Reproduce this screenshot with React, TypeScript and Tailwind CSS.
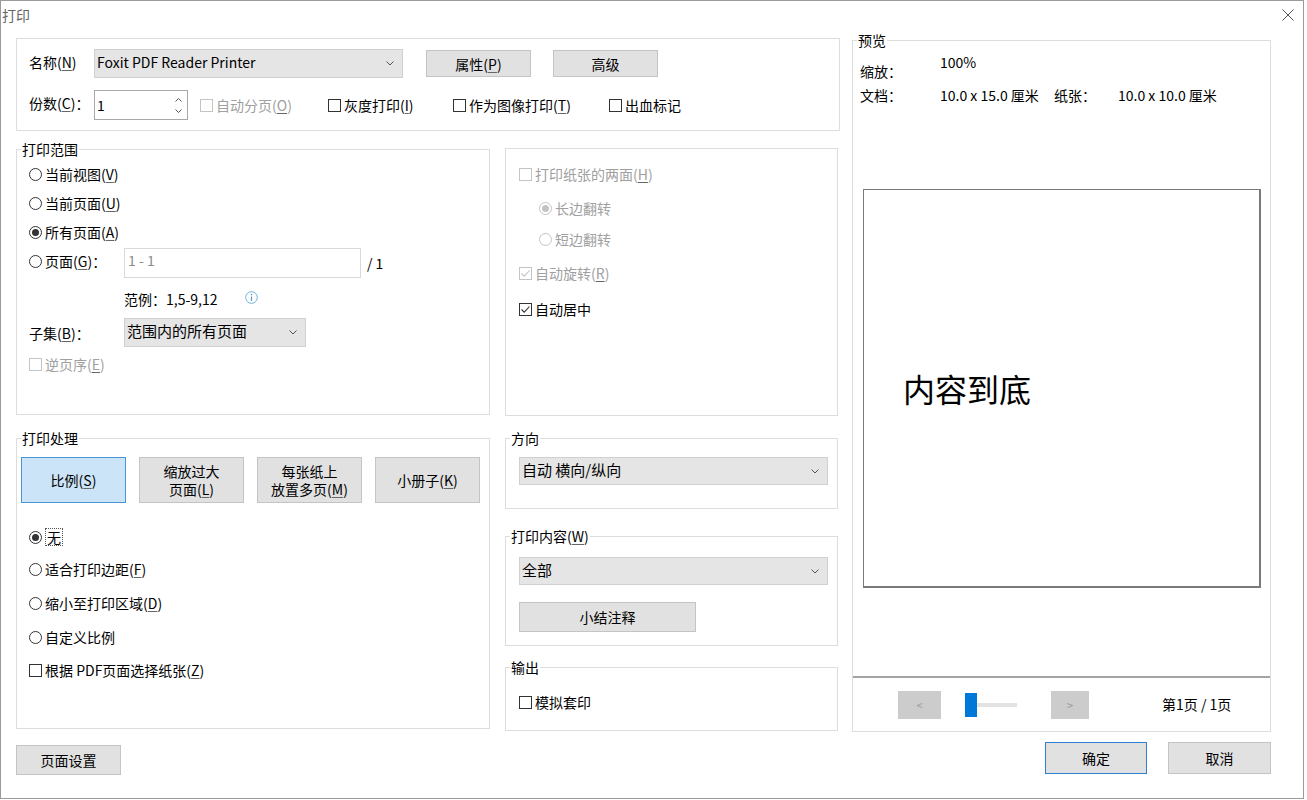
import React from 'react';

const FONT = "font-['Noto_Sans_CJK_SC','Noto_Sans',sans-serif]";

// mnemonic letter, underlined like the Windows dialog
function Mn({ c }: { c: string }) {
  return (
    <>
      (<span className="underline underline-offset-[2px] decoration-[#666]">{c}</span>)
    </>
  );
}

function Chevron() {
  return (
    <svg width="8" height="5" viewBox="0 0 8 5" className="shrink-0">
      <path d="M0.5 0.5 L4 4 L7.5 0.5" fill="none" stroke="#555" strokeWidth="1" />
    </svg>
  );
}

function Radio({
  checked,
  disabled,
  children,
  className = '',
}: {
  checked?: boolean;
  disabled?: boolean;
  children: React.ReactNode;
  className?: string;
}) {
  return (
    <div className={`flex items-center h-[20px] gap-[3px] ${className}`}>
      <span
        className={`w-[13px] h-[13px] rounded-full border bg-white flex items-center justify-center shrink-0 ${
          disabled ? 'border-[#c4c4c4]' : 'border-[#333333]'
        }`}
      >
        {checked && (
          <span className={`w-[7px] h-[7px] rounded-full ${disabled ? 'bg-[#c4c4c4]' : 'bg-[#333333]'}`} />
        )}
      </span>
      <span className={disabled ? 'text-[#a0a0a0]' : 'text-black'}>{children}</span>
    </div>
  );
}

function Check({
  checked,
  disabled,
  children,
  className = '',
}: {
  checked?: boolean;
  disabled?: boolean;
  children: React.ReactNode;
  className?: string;
}) {
  return (
    <div className={`flex items-center h-[20px] gap-[3px] ${className}`}>
      <span
        className={`w-[13px] h-[13px] border bg-white flex items-center justify-center shrink-0 ${
          disabled ? 'border-[#c4c4c4]' : 'border-[#333333]'
        }`}
      >
        {checked && (
          <svg width="11" height="11" viewBox="0 0 11 11">
            <path
              d="M1.5 5.5 L4.2 8.2 L9.5 2.5"
              fill="none"
              stroke={disabled ? '#c4c4c4' : '#333'}
              strokeWidth="1.1"
            />
          </svg>
        )}
      </span>
      <span className={disabled ? 'text-[#a0a0a0]' : 'text-black'}>{children}</span>
    </div>
  );
}

function Select({ value, className = '' }: { value: string; className?: string }) {
  return (
    <div
      className={`bg-[#e5e5e5] border border-[#d0d0d0] flex items-center justify-between pl-[2px] pr-[8px] ${className}`}
    >
      <span className="whitespace-nowrap leading-[22px] mb-[3px]">{value}</span>
      <Chevron />
    </div>
  );
}

function Btn({ children, className = '' }: { children: React.ReactNode; className?: string }) {
  return (
    <div
      className={`bg-[#e1e1e1] border border-[#c4c4c4] flex items-center justify-center text-center leading-[18px] ${className}`}
    >
      {children}
    </div>
  );
}

function Group({
  label,
  className = '',
  children,
}: {
  label: React.ReactNode;
  className?: string;
  children: React.ReactNode;
}) {
  return (
    <fieldset className={`border border-[#dddddd] min-w-0 ${className}`}>
      <legend className="ml-[4px] px-[1px] leading-[18px]">{label}</legend>
      {children}
    </fieldset>
  );
}

export default function App() {
  return (
    <div className={`w-[1307px] h-[800px] bg-white ${FONT} text-[14px] leading-[18px] text-black`}>
      <div className="w-[1304px] h-[799px] border border-[#9a9a9a] flex flex-col">
        {/* title bar */}
        <div className="h-[29px] flex items-start justify-between pl-[1px] pr-[9px]">
          <span className="mt-[5px] text-[#666666]">打印</span>
          <svg width="12" height="12" viewBox="0 0 12 12" className="mt-[8px]">
            <path d="M0.5 0.5 L11.5 11.5 M11.5 0.5 L0.5 11.5" stroke="#555" strokeWidth="1" />
          </svg>
        </div>

        <div className="flex pl-[15px] gap-[12px]">
          {/* left part */}
          <div className="w-[824px] flex flex-col">
            {/* printer */}
            <div className="mt-[8px] h-[93px] border border-[#dddddd] pt-[10px] pl-[12px]">
              <div className="flex items-center h-[29px]">
                <span className="w-[65px] mb-[3px]">
                  名称<Mn c="N" />
                </span>
                <Select value="Foxit PDF Reader Printer" className="w-[309px] h-[29px]" />
                <Btn className="w-[105px] h-[27px] ml-[23px]">
                  属性<Mn c="P" />
                </Btn>
                <Btn className="w-[105px] h-[27px] ml-[22px]">高级</Btn>
              </div>
              <div className="flex items-center h-[30px] mt-[12px]">
                <span className="w-[65px] mb-[5px]">
                  份数<Mn c="C" />：
                </span>
                <div className="w-[94px] h-[30px] border border-[#a8a8a8] bg-white flex items-center">
                  <span className="flex-1 pl-[2px]">1</span>
                  <div className="w-[18px] h-full flex flex-col items-center justify-center gap-[7px]">
                    <svg width="7" height="4" viewBox="0 0 7 4">
                      <path d="M0.5 3.5 L3.5 0.5 L6.5 3.5" fill="none" stroke="#555" />
                    </svg>
                    <svg width="7" height="4" viewBox="0 0 7 4">
                      <path d="M0.5 0.5 L3.5 3.5 L6.5 0.5" fill="none" stroke="#555" />
                    </svg>
                  </div>
                </div>
                <Check disabled className="ml-[12px] w-[128px]">
                  自动分页<Mn c="O" />
                </Check>
                <Check className="w-[125px]">
                  灰度打印<Mn c="I" />
                </Check>
                <Check className="w-[156px]">
                  作为图像打印<Mn c="T" />
                </Check>
                <Check>出血标记</Check>
              </div>
            </div>

            {/* range + duplex */}
            <div className="flex gap-[15px] mt-[9px] items-start">
              <Group label="打印范围" className="w-[474px] h-[275px]">
                <div className="pl-[12px] pt-[6px] flex flex-col">
                  <Radio>
                    当前视图<Mn c="V" />
                  </Radio>
                  <Radio className="mt-[9px]">
                    当前页面<Mn c="U" />
                  </Radio>
                  <Radio checked className="mt-[9px]">
                    所有页面<Mn c="A" />
                  </Radio>
                  <div className="flex items-center h-[30px] mt-[6px]">
                    <Radio className="w-[95px] mb-[4px]">
                      页面<Mn c="G" />：
                    </Radio>
                    <div className="w-[237px] h-[30px] border border-[#d9d9d9] pl-[3px] pt-[2px] text-[#8c8c8c]">
                      1 - 1
                    </div>
                    <span className="ml-[6px]">/ 1</span>
                  </div>
                  <div className="flex items-center h-[20px] mt-[11px] pl-[95px]">
                    <span>范例：1,5-9,12</span>
                    <svg width="13" height="13" viewBox="0 0 13 13" className="ml-[27px] mb-[3px]">
                      <circle cx="6.5" cy="6.5" r="5.8" fill="none" stroke="#6fb0d8" strokeWidth="1" />
                      <path d="M6.5 5.5 V10" stroke="#4f9ccc" strokeWidth="1.2" />
                      <circle cx="6.5" cy="3.6" r="0.8" fill="#4f9ccc" />
                    </svg>
                  </div>
                  <div className="flex items-center h-[29px] mt-[9px]">
                    <span className="w-[95px]">
                      子集<Mn c="B" />：
                    </span>
                    <Select value="范围内的所有页面" className="w-[182px] h-[29px] text-[15px]" />
                  </div>
                  <Check disabled className="mt-[7px]">
                    逆页序<Mn c="E" />
                  </Check>
                </div>
              </Group>

              <div className="w-[333px] h-[268px] mt-[8px] border border-[#dddddd] pl-[13px] pt-[15px] flex flex-col">
                <Check disabled>
                  打印纸张的两面<Mn c="H" />
                </Check>
                <Radio checked disabled className="ml-[20px] mt-[14px]">
                  长边翻转
                </Radio>
                <Radio disabled className="ml-[20px] mt-[11px]">
                  短边翻转
                </Radio>
                <Check checked disabled className="mt-[14px]">
                  自动旋转<Mn c="R" />
                </Check>
                <Check checked className="mt-[16px]">
                  自动居中
                </Check>
              </div>
            </div>

            {/* handling + orientation */}
            <div className="flex gap-[15px] mt-[13px] items-start">
              <Group label="打印处理" className="w-[474px] h-[300px]">
                <div className="pt-[10px] pl-[4px] flex gap-[13px]">
                  <Btn className="w-[105px] h-[46px] !bg-[#cce4f7] !border-[#4a94d4]">
                    比例<Mn c="S" />
                  </Btn>
                  <Btn className="w-[105px] h-[46px]">
                    <span>
                      缩放过大
                      <br />
                      页面<Mn c="L" />
                    </span>
                  </Btn>
                  <Btn className="w-[105px] h-[46px]">
                    <span>
                      每张纸上
                      <br />
                      放置多页<Mn c="M" />
                    </span>
                  </Btn>
                  <Btn className="w-[105px] h-[46px]">
                    小册子<Mn c="K" />
                  </Btn>
                </div>
                <div className="pl-[12px] flex flex-col">
                  <div className="flex items-center h-[20px] gap-[3px] mt-[24px]">
                    <span className="w-[13px] h-[13px] rounded-full border border-[#333333] bg-white flex items-center justify-center">
                      <span className="w-[7px] h-[7px] rounded-full bg-[#333333]" />
                    </span>
                    <span className="border border-dotted border-[#555] px-[1px] leading-[16px]">无</span>
                  </div>
                  <Radio className="mt-[12px]">
                    适合打印边距<Mn c="F" />
                  </Radio>
                  <Radio className="mt-[14px]">
                    缩小至打印区域<Mn c="D" />
                  </Radio>
                  <Radio className="mt-[14px]">自定义比例</Radio>
                  <Check className="mt-[13px]">
                    根据 PDF页面选择纸张<Mn c="Z" />
                  </Check>
                </div>
              </Group>

              <div className="w-[333px] flex flex-col">
                <Group label="方向" className="h-[80px]">
                  <div className="pt-[10px] pl-[13px]">
                    <Select value="自动 横向/纵向" className="w-[309px] h-[28px] text-[15px]" />
                  </div>
                </Group>
                <Group
                  label={
                    <>
                      打印内容<Mn c="W" />
                    </>
                  }
                  className="h-[119px] mt-[18px]"
                >
                  <div className="pt-[12px] pl-[13px]">
                    <Select value="全部" className="w-[309px] h-[28px] text-[15px]" />
                    <Btn className="w-[177px] h-[30px] mt-[17px]">小结注释</Btn>
                  </div>
                </Group>
                <Group label="输出" className="h-[73px] mt-[12px]">
                  <div className="pt-[16px] pl-[13px]">
                    <Check>模拟套印</Check>
                  </div>
                </Group>
              </div>
            </div>

            <Btn className="w-[105px] h-[30px] mt-[14px]">页面设置</Btn>
          </div>

          {/* preview */}
          <div className="w-[419px] flex flex-col">
            <Group label="预览" className="h-[701px] mt-[1px]">
              <div className="pt-[4px] pl-[7px] flex items-start h-[27px]">
                <span className="w-[80px] mt-[9px]">缩放：</span>
                <span>100%</span>
              </div>
              <div className="pl-[7px] flex items-center h-[18px] mt-[10px]">
                <span className="w-[80px]">文档：</span>
                <span className="w-[114px]">10.0 x 15.0 厘米</span>
                <span className="w-[64px]">纸张：</span>
                <span>10.0 x 10.0 厘米</span>
              </div>
              <div className="ml-[10px] mt-[85px] w-[398px] h-[399px] border border-[#7a7a7a] border-r-2 border-b-2 flex items-center pl-[39px]">
                <span className="text-[32px] leading-[40px]">内容到底</span>
              </div>
              <div className="mt-[88px] h-[2px] bg-[#a3a3a3]" />
              <div className="mt-[13px] h-[28px] flex items-center pl-[45px]">
                <div className="w-[43px] h-[28px] bg-[#cccccc] flex items-center justify-center text-[11px] text-[#9a9a9a]">
                  &lt;
                </div>
                <div className="ml-[24px] flex items-center">
                  <div className="w-[12px] h-[24px] bg-[#0078d7]" />
                  <div className="w-[40px] h-[4px] bg-[#e3e3e3]" />
                </div>
                <div className="ml-[34px] w-[38px] h-[28px] bg-[#cccccc] flex items-center justify-center text-[11px] text-[#9a9a9a]">
                  &gt;
                </div>
                <span className="ml-[73px] mb-[3px]">第1页 / 1页</span>
              </div>
            </Group>
            <div className="mt-[10px] flex justify-end gap-[21px]">
              <Btn className="w-[102px] h-[32px] !border-[#2f7fd0]">确定</Btn>
              <Btn className="w-[103px] h-[32px]">取消</Btn>
            </div>
          </div>
        </div>
      </div>
    </div>
  );
}
